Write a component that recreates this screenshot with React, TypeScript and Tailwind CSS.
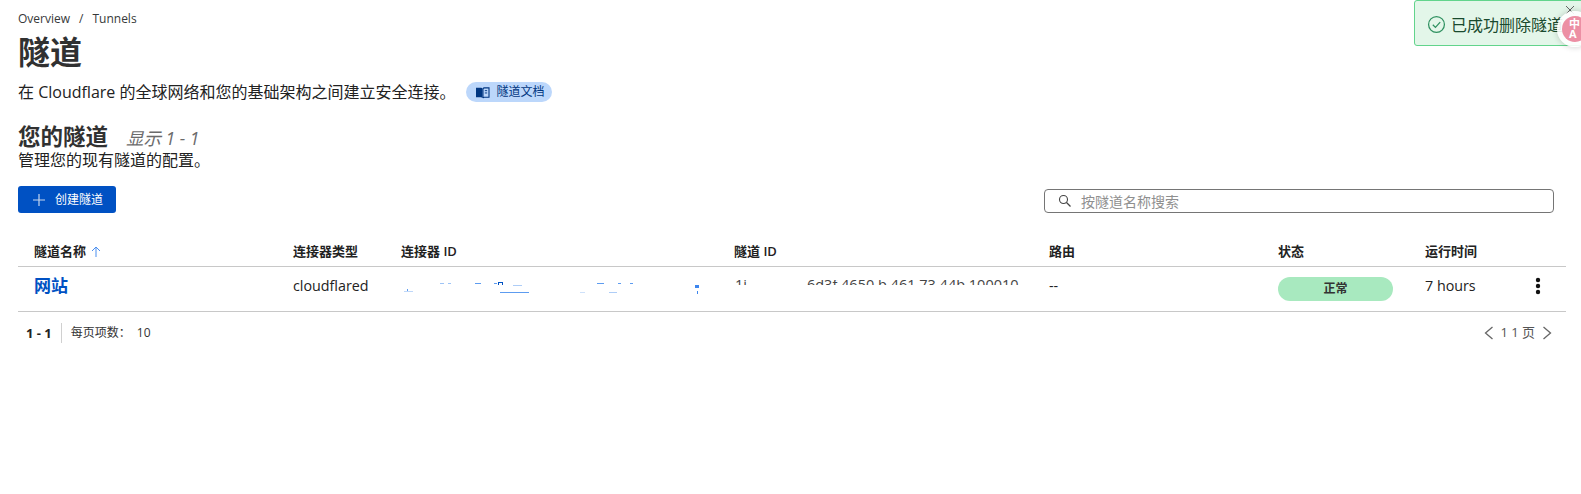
import React from "react";

function Book() {
  return (
    <svg width="15" height="13" viewBox="0 0 16 14" className="shrink-0">
      <path d="M1 2h5.500c.8 0 1.200.4 1.500 1v10c-.4-.6-1-.9-1.800-.9H1z" fill="#003681" />
      <path d="M8.500 3c.3-.6.7-1 1.500-1h5v10.100h-5c-.7 0-1.200.3-1.500.9z" fill="none" stroke="#003681" strokeWidth="1.200" />
      <path d="M10.500 5h2.500M10.500 7.500h2.500" stroke="#003681" strokeWidth="1" />
    </svg>
  );
}

const cols = "grid grid-cols-[275px_108px_333px_315px_229px_147px_1fr]";

export default function App() {
  return (
    <div className="relative w-[1581px] h-[494px] overflow-hidden bg-white text-[#222] font-['Open_Sans','Noto_Sans_CJK_SC',sans-serif]">
      <div className="pl-[18px] pr-[15px] pt-[11px]">
        <nav className="flex items-center gap-[9px] h-[16px] text-[12px] text-[#36393a]">
          <span>Overview</span>
          <span>/</span>
          <span>Tunnels</span>
        </nav>
        <h1 className="mt-[3px] text-[32px] leading-[44px] font-bold text-[#313131]">隧道</h1>
        <div className="mt-[6px] flex items-center h-[24px]">
          <p className="text-[16px] leading-[24px] text-[#222]">在 Cloudflare 的全球网络和您的基础架构之间建立安全连接。</p>
          <a className="ml-[10px] flex items-center gap-[7px] h-[20px] w-[86px] pl-[9px] rounded-full bg-[#bcd7fb] text-[12px] text-[#003681]">
            <Book />
            <span className="whitespace-nowrap">隧道文档</span>
          </a>
        </div>
        <div className="mt-[19px] flex items-baseline h-[28px]">
          <h2 className="text-[22.500px] leading-[28px] font-bold text-[#313131]">您的隧道</h2>
          <span className="ml-[18px] text-[17.500px] italic text-[#6b6b6b]">显示 1 - 1</span>
        </div>
        <p className="-mt-[1px] text-[16px] leading-[20px] text-[#222]">管理您的现有隧道的配置。</p>
        <div className="mt-[16px] flex items-start justify-between pr-[12px]">
          <button className="flex items-center h-[27px] w-[98px] pl-[14px] rounded-[3px] bg-[#0051c3] text-white text-[12px]">
            <svg width="14" height="14" viewBox="0 0 14 14" className="shrink-0">
              <path d="M7 1v12M1 7h12" stroke="#c5d6ee" strokeWidth="1.200" />
            </svg>
            <span className="ml-[9px]">创建隧道</span>
          </button>
          <div className="mt-[3px] flex items-center h-[24px] w-[510px] pl-[13px] rounded-[4px] border border-[#757575] bg-white">
            <svg width="14" height="14" viewBox="0 0 14 14" className="shrink-0">
              <circle cx="5.500" cy="5.500" r="4" fill="none" stroke="#444" strokeWidth="1.100" />
              <path d="M8.500 8.500l4 4" stroke="#444" strokeWidth="1.200" />
            </svg>
            <span className="ml-[9px] text-[14px] text-[#8f8f8f]">按隧道名称搜索</span>
          </div>
        </div>

        <div className="mt-[23px]">
          <div className={`${cols} items-center h-[31px] pt-[1px] border-b border-[#c8c8c8] text-[13px] font-semibold text-[#222]`}>
            <div className="pl-[16px] flex items-center gap-[5px]">
              隧道名称
              <svg width="10" height="11" viewBox="0 0 10 11">
                <path d="M5 1v10M1 5l4-4 4 4" fill="none" stroke="#4b8ff0" strokeWidth="1" />
              </svg>
            </div>
            <div>连接器类型</div>
            <div>连接器 ID</div>
            <div>隧道 ID</div>
            <div>路由</div>
            <div>状态</div>
            <div>运行时间</div>
          </div>
          <div className={`${cols} items-center h-[45px] border-b border-[#c8c8c8] text-[14.300px] text-[#222]`}>
            <div className="pl-[16px] pb-[6px] text-[17px] font-bold text-[#0051c3]">网站</div>
            <div className="pb-[6px]">cloudflared</div>
            <div>
              <svg width="300" height="14" viewBox="0 0 300 14" className="block">
                <g fill="#5d9cf0">
                  <rect x="3" y="9" width="9" height="1" opacity=".4" />
                  <rect x="6" y="7" width="1" height="2" />
                  <rect x="39" y="1" width="4" height="1" opacity=".6" />
                  <rect x="47" y="1" width="3" height="1" opacity=".6" />
                  <rect x="74" y="1" width="6" height="1" />
                  <rect x="93" y="1" width="3" height="1" />
                  <rect x="97" y="0" width="5" height="1" fill="#0051c3" />
                  <rect x="97" y="1" width="1" height="2" fill="#0051c3" />
                  <rect x="101" y="1" width="1" height="2" fill="#0051c3" />
                  <rect x="112" y="3" width="9" height="1" opacity=".5" />
                  <rect x="99" y="10" width="29" height="1" />
                  <rect x="196" y="1" width="7" height="1" />
                  <rect x="217" y="1" width="3" height="1" />
                  <rect x="229" y="1" width="3" height="1" />
                  <rect x="179" y="10" width="5" height="1" opacity=".3" />
                  <rect x="208" y="10" width="8" height="1" opacity=".5" />
                  <rect x="294" y="3" width="4" height="3" fill="#3d86ee" />
                  <rect x="296" y="9" width="1" height="3" fill="#3d86ee" />
                </g>
              </svg>
            </div>
            <div className="h-[5px] overflow-hidden leading-[17px] mb-[13px] text-[14.500px] whitespace-nowrap text-[#444]">
              <div className="-mt-[4px]">
                <span className="ml-[1px]">1i</span>
                <span className="ml-[60px]">6d3f 4650 b 461 73 44b 100010</span>
              </div>
            </div>
            <div className="pb-[6px]">--</div>
            <div>
              <div className="flex items-center justify-center h-[24px] w-[115px] rounded-full bg-[#a8e9bf] text-[12px] font-semibold text-[#333]">
                正常
              </div>
            </div>
            <div className="flex items-center justify-between pr-[25px] pb-[6px]">
              <span>7 hours</span>
              <svg width="6" height="18" viewBox="0 0 6 18">
                <circle cx="3" cy="3" r="2.200" fill="#111" />
                <circle cx="3" cy="9" r="2.200" fill="#111" />
                <circle cx="3" cy="15" r="2.200" fill="#111" />
              </svg>
            </div>
          </div>
          <div className="flex items-center justify-between h-[42px] pl-[8px] pr-[14px] text-[12px] text-[#333]">
            <div className="flex items-center">
              <span className="text-[13px] font-bold text-[#222] pr-[9px] h-[20px] leading-[20px] border-r border-[#d0d0d0]">1 - 1</span>
              <span className="ml-[9px]">每页项数：</span>
              <span className="ml-[6px]">10</span>
            </div>
            <div className="flex items-center text-[13px] text-[#555]">
              <svg width="10" height="14" viewBox="0 0 10 14">
                <path d="M8.500 1L1.500 7l7 6" fill="none" stroke="#666" strokeWidth="1.300" />
              </svg>
              <span className="ml-[6px]">1 1 页</span>
              <svg width="10" height="14" viewBox="0 0 10 14" className="ml-[7px]">
                <path d="M1.500 1l7 6-7 6" fill="none" stroke="#666" strokeWidth="1.300" />
              </svg>
            </div>
          </div>
        </div>
      </div>

      <div className="absolute left-[1414px] top-0 w-[190px] h-[46px] flex items-center pl-[12px] pt-[3px] rounded-[3px] border border-[#62d48c] bg-[#e3f6e9] text-[#1a4a2e]">
        <svg width="19" height="19" viewBox="0 0 18 18" className="shrink-0">
          <circle cx="9" cy="9" r="7.500" fill="none" stroke="#2f9160" strokeWidth="1.200" />
          <path d="M5.500 9.200l2.500 2.500 4.500-5" fill="none" stroke="#2f9160" strokeWidth="1.200" />
        </svg>
        <span className="ml-[5px] text-[16px] whitespace-nowrap">已成功删除隧道</span>
      </div>
      <svg width="10" height="10" viewBox="0 0 10 10" className="absolute left-[1565px] top-[5px]">
        <path d="M1 1l8 8M9 1l-8 8" stroke="#666" strokeWidth="1" />
      </svg>
      <div className="absolute left-[1557px] top-[11px] w-[36px] h-[36px] rounded-full bg-white/90 shadow-[0_0_6px_rgba(0,0,0,0.2)] flex items-center justify-center">
        <div className="w-[26px] h-[26px] rounded-full bg-[#ec8fa4] text-white text-[11px] leading-[10px] font-bold pl-[7px] pt-[3px]">
          <div>中</div>
          <div>A</div>
        </div>
      </div>
    </div>
  );
}
